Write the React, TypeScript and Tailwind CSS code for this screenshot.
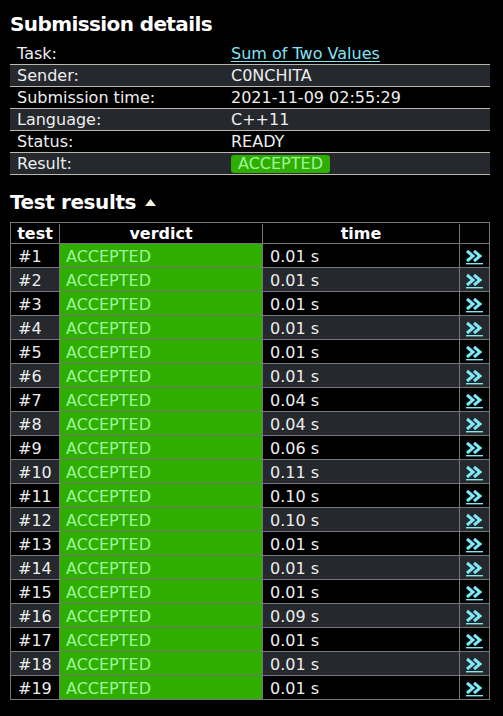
import React from "react";

const details: { label: string; value: React.ReactNode }[] = [
  {
    label: "Task:",
    value: <a className="text-[#7fe3f5] underline underline-offset-2">Sum of Two Values</a>,
  },
  { label: "Sender:", value: "C0NCHITA" },
  { label: "Submission time:", value: "2021-11-09 02:55:29" },
  { label: "Language:", value: "C++11" },
  { label: "Status:", value: "READY" },
  {
    label: "Result:",
    value: (
      <span className="inline-block rounded-[3px] bg-[#2fae00] px-[7px] leading-[18px] text-[#9ef59e]">
        ACCEPTED
      </span>
    ),
  },
];

const times = [
  "0.01", "0.01", "0.01", "0.01", "0.01", "0.01", "0.04", "0.04", "0.06", "0.11",
  "0.10", "0.10", "0.01", "0.01", "0.01", "0.09", "0.01", "0.01", "0.01",
];

function DetailsLink() {
  return (
    <a className="block">
      <svg width="17" height="16" viewBox="0 0 17 16">
        <path d="M1 2 L7 7 L1 12" fill="none" stroke="#7fe8f8" strokeWidth="3" />
        <path d="M8 2 L14 7 L8 12" fill="none" stroke="#7fe8f8" strokeWidth="3" />
        <rect x="0" y="14" width="17" height="1.4" fill="#7fe8f8" />
      </svg>
    </a>
  );
}

export default function App() {
  return (
    <div
      className="min-h-[716px] bg-black px-[10px] text-[16px] text-[#eeeeee]"
      style={{ fontFamily: '"DejaVu Sans", Verdana, sans-serif' }}
    >
      <h2 className="pt-[12px] pb-[7px] text-[20px] font-bold leading-[24px] tracking-[-0.6px] text-white">
        Submission details
      </h2>

      {/* details table */}
      <div className="w-[480px]">
        {details.map((row, i) => (
          <div
            key={row.label}
            className={`grid h-[22px] grid-cols-[221px_1fr] border-b border-[#bdb8ad] leading-[21px] ${
              i % 2 === 1 ? "bg-[#25282c]" : "bg-black"
            }`}
          >
            <div className="pl-[7px]">{row.label}</div>
            <div className="flex items-center">{row.value}</div>
          </div>
        ))}
      </div>

      <h2 className="mt-[15px] mb-[8px] flex items-center gap-[9px] text-[20px] font-bold leading-[24px] tracking-[-0.4px] text-white">
        Test results
        <svg width="11" height="7" viewBox="0 0 11 7" className="mt-[1px]">
          <polygon points="0,7 5.5,0 11,7" fill="#f5f0e0" />
        </svg>
      </h2>

      {/* test results table */}
      <div className="w-[480px] border-x border-t border-[#777777]">
        <div className="flex h-[21px] border-b border-[#777777] bg-black pt-[1px] font-bold leading-[19px] text-white">
          <div className="w-[49px] border-r border-[#777777] text-center">test</div>
          <div className="w-[203px] border-r border-[#777777] text-center">verdict</div>
          <div className="w-[197px] border-r border-[#777777] text-center">time</div>
          <div className="flex-1" />
        </div>
        {times.map((t, i) => (
          <div
            key={i}
            className={`flex h-[24px] border-b border-[#777777] leading-[20px] ${
              i % 2 === 1 ? "bg-[#25282c]" : "bg-black"
            }`}
          >
            <div className="w-[49px] border-r border-[#777777] pl-[7px] pt-[3px]">#{i + 1}</div>
            <div className="w-[203px] border-r border-[#777777] bg-[#2fae00] pl-[6px] pt-[3px] text-[#9ef59e]">
              ACCEPTED
            </div>
            <div className="w-[197px] border-r border-[#777777] pl-[7px] pt-[3px]">{t} s</div>
            <div className="flex flex-1 justify-center pt-[5px]">
              <DetailsLink />
            </div>
          </div>
        ))}
      </div>
    </div>
  );
}
